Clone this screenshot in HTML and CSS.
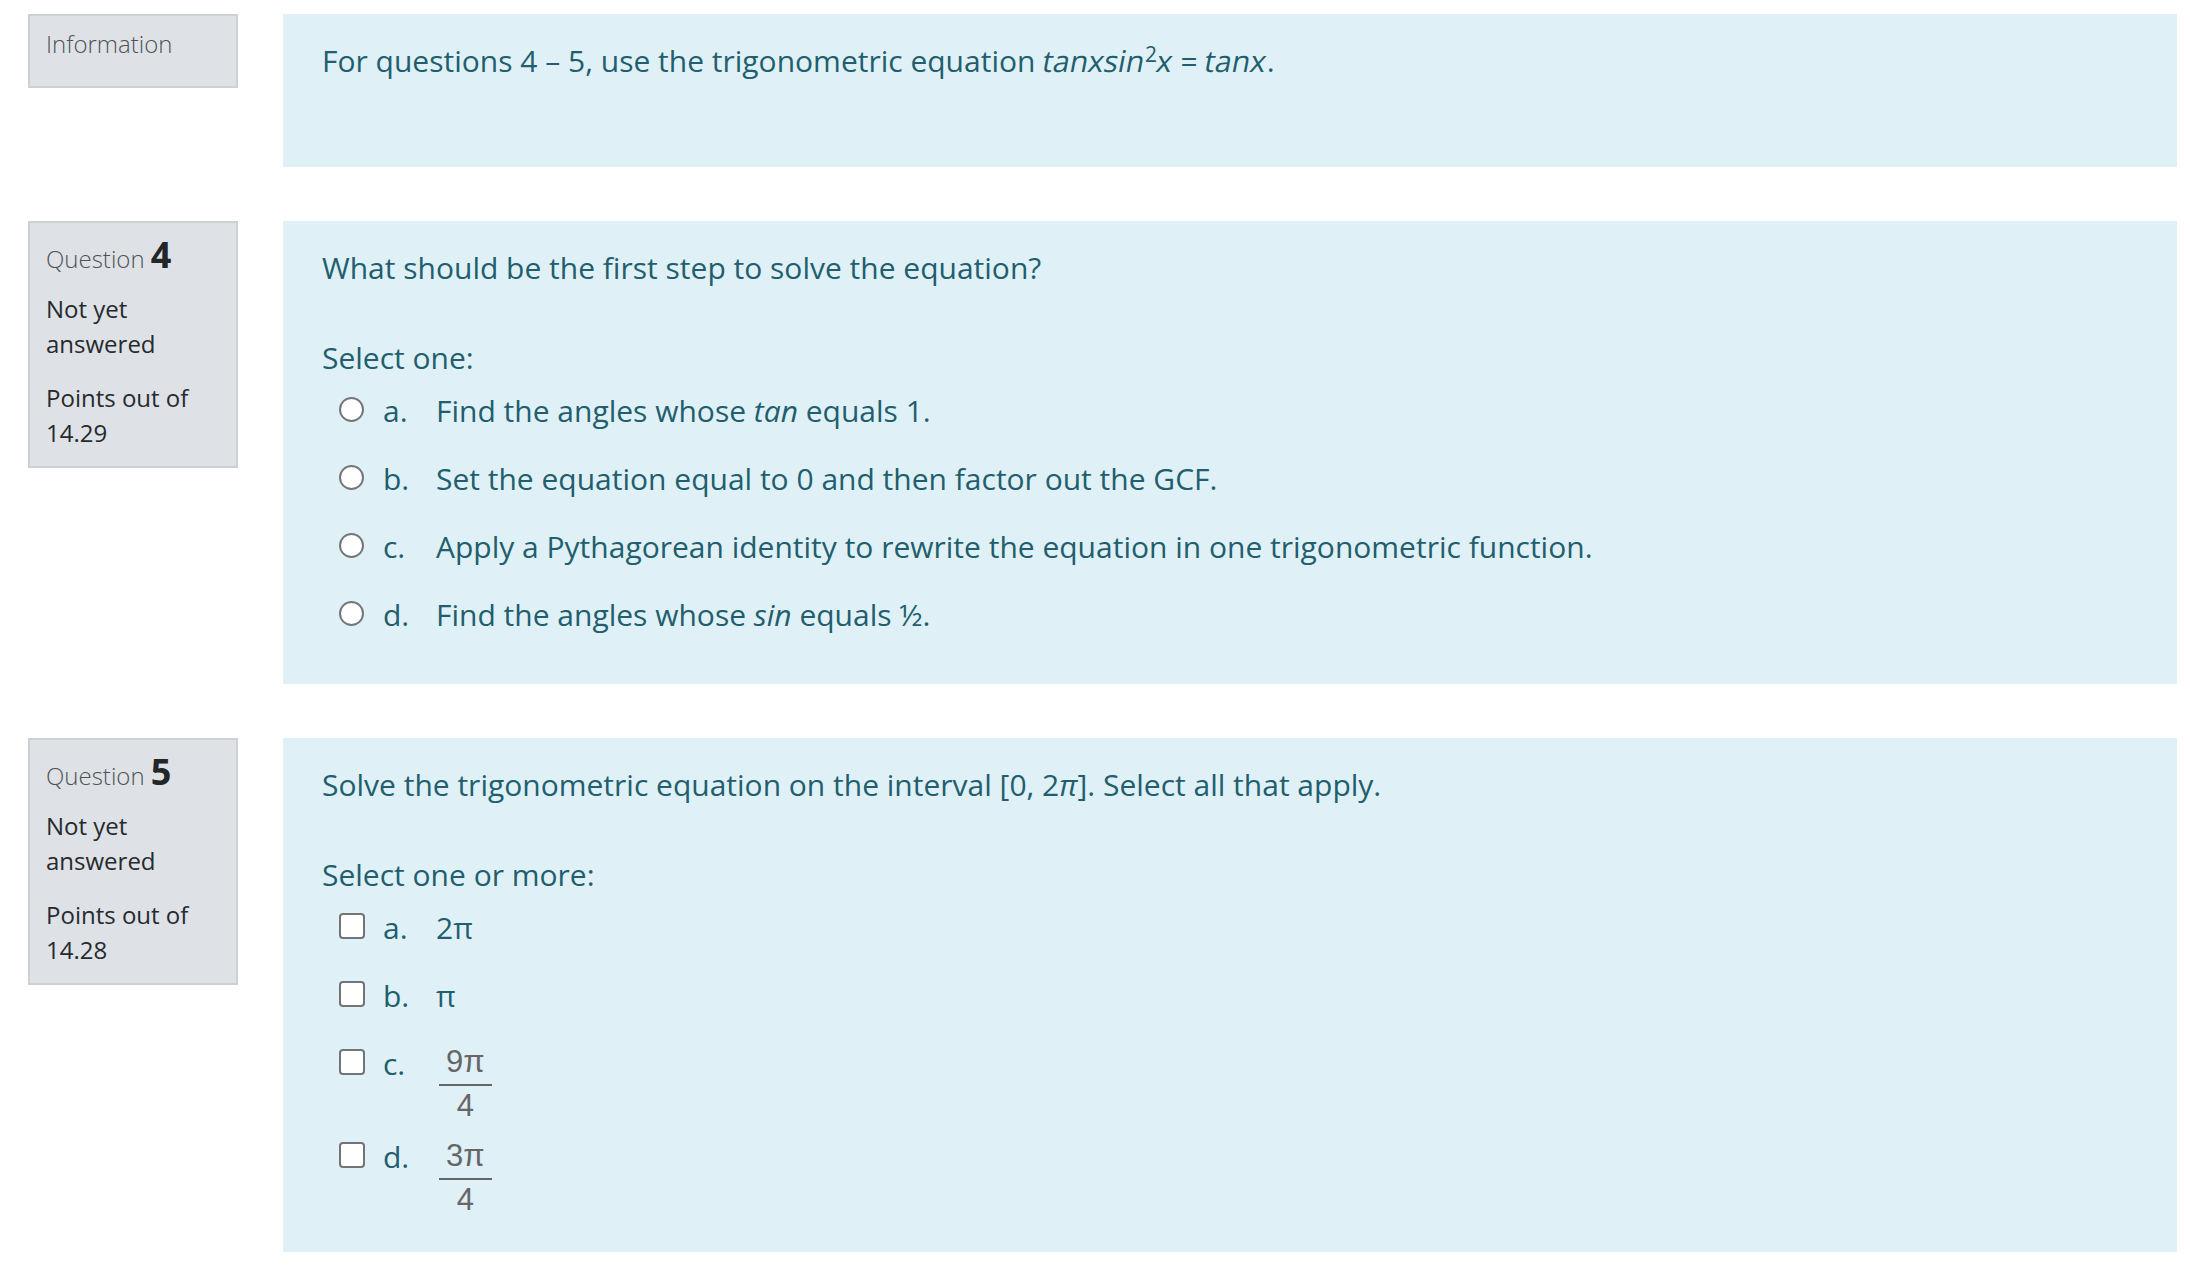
FILE: index.html
```html
<!DOCTYPE html>
<html lang="en">
<head>
<meta charset="utf-8">
<title>Quiz</title>
<link rel="stylesheet" href="styles.css">
</head>
<body>
<div class="page">
  <div class="que">
    <div class="info">
      <h3 class="no">Information</h3>
    </div>
    <div class="formulation">
      <p class="qtext">For questions 4 – 5, use the trigonometric equation <span class="obl">tanxsin</span><sup>2</sup><span class="obl">x</span> = <span class="obl">tanx</span>.</p>
    </div>
  </div>

  <div class="que">
    <div class="info">
      <h3 class="no">Question <span class="qno">4</span></h3>
      <div class="state">Not yet<br>answered</div>
      <div class="grade">Points out of<br>14.29</div>
    </div>
    <div class="formulation">
      <p class="qtext">What should be the first step to solve the equation?</p>
      <div class="prompt">Select one:</div>
      <div class="answer">
        <div class="opt"><span class="radio"></span><span class="num">a.</span><span class="txt">Find the angles whose <i>tan</i> equals 1.</span></div>
        <div class="opt"><span class="radio"></span><span class="num">b.</span><span class="txt">Set the equation equal to 0 and then factor out the GCF.</span></div>
        <div class="opt"><span class="radio"></span><span class="num">c.</span><span class="txt">Apply a Pythagorean identity to rewrite the equation in one trigonometric function.</span></div>
        <div class="opt"><span class="radio"></span><span class="num">d.</span><span class="txt">Find the angles whose <i>sin</i> equals ½.</span></div>
      </div>
    </div>
  </div>

  <div class="que">
    <div class="info">
      <h3 class="no">Question <span class="qno">5</span></h3>
      <div class="state">Not yet<br>answered</div>
      <div class="grade">Points out of<br>14.28</div>
    </div>
    <div class="formulation">
      <p class="qtext">Solve the trigonometric equation on the interval [0, 2<i>π</i>]. Select all that apply.</p>
      <div class="prompt">Select one or more:</div>
      <div class="answer">
        <div class="opt"><span class="check"></span><span class="num">a.</span><span class="txt">2π</span></div>
        <div class="opt"><span class="check"></span><span class="num">b.</span><span class="txt">π</span></div>
        <div class="opt"><span class="check"></span><span class="num">c.</span><span class="txt"><span class="frac f9"><span class="fn">9π</span><span class="fd">4</span></span></span></div>
        <div class="opt"><span class="check"></span><span class="num">d.</span><span class="txt"><span class="frac f3"><span class="fn">3π</span><span class="fd">4</span></span></span></div>
      </div>
    </div>
  </div>
</div>
</body>
</html>
```

FILE: styles.css
```css
html, body {
  margin: 0;
  padding: 0;
  background: #ffffff;
}
body {
  font-family: "Open Sans", "Liberation Sans", sans-serif;
  color: #212529;
}
.page {
  padding: 14px 31px 20px 28px;
}
.que {
  display: flex;
  align-items: flex-start;
  gap: 45px;
  margin-bottom: 54px;
}
.info {
  flex: 0 0 210px;
  box-sizing: border-box;
  width: 210px;
  background: #dee2e6;
  border: 2px solid #cdd1d6;
  padding: 10px 16px 11px 16px;
  font-size: 24px;
  line-height: 35px;
  color: #262a2e;
}
.no {
  margin: 0 0 14px 0;
  font-size: 24px;
  line-height: 35px;
  font-weight: 300;
  color: #4f5357;
}
.qno {
  font-size: 36px;
  line-height: 44px;
  font-weight: 700;
  color: #222629;
}
.state {
  margin-bottom: 19px;
}
.grade {
  margin-bottom: 5px;
}
.formulation {
  flex: 1 1 auto;
  background: #dff1f7;
  color: #225e6d;
  padding: 26px 39px 35px 39px;
  font-size: 30px;
  line-height: 42px;
}
.qtext {
  margin: 0 0 48px 0;
}
.qtext:last-child {
  margin-bottom: 50px;
}
.obl {
  display: inline-block;
  font-style: normal;
  transform: skewX(-11deg);
}
.qtext sup {
  font-size: 0.7em;
  line-height: 0;
  vertical-align: 0.5em;
}
.prompt {
  margin-bottom: -2px;
}
.answer {
  padding-left: 17px;
}
.opt {
  display: flex;
  align-items: baseline;
  padding: 13px 0;
}
.radio {
  flex: 0 0 auto;
  box-sizing: border-box;
  width: 25px;
  height: 25px;
  border: 2px solid #74777a;
  border-radius: 50%;
  background: #ffffff;
  margin-bottom: -1px;
  margin-right: 19px;
}
.check {
  flex: 0 0 auto;
  box-sizing: border-box;
  width: 26px;
  height: 26px;
  border: 2px solid #727476;
  border-radius: 4px;
  background: #ffffff;
  margin-bottom: -2px;
  margin-right: 18px;
}
.num {
  flex: 0 0 auto;
  width: 53px;
}
.frac {
  display: inline-flex;
  flex-direction: column;
  align-items: stretch;
  font-family: "Liberation Sans", Arial, sans-serif;
  font-size: 31px;
  color: #666666;
  margin-left: 3px;
  margin-bottom: -11px;
}
.f9 { vertical-align: 3px; }
.f3 { vertical-align: 2px; }
.fn {
  display: block;
  line-height: 30px;
  padding: 0 7px 7px 7px;
  border-bottom: 2px solid #666666;
  text-align: center;
}
.fd {
  display: block;
  line-height: 30px;
  padding-top: 5px;
  text-align: center;
}
```
